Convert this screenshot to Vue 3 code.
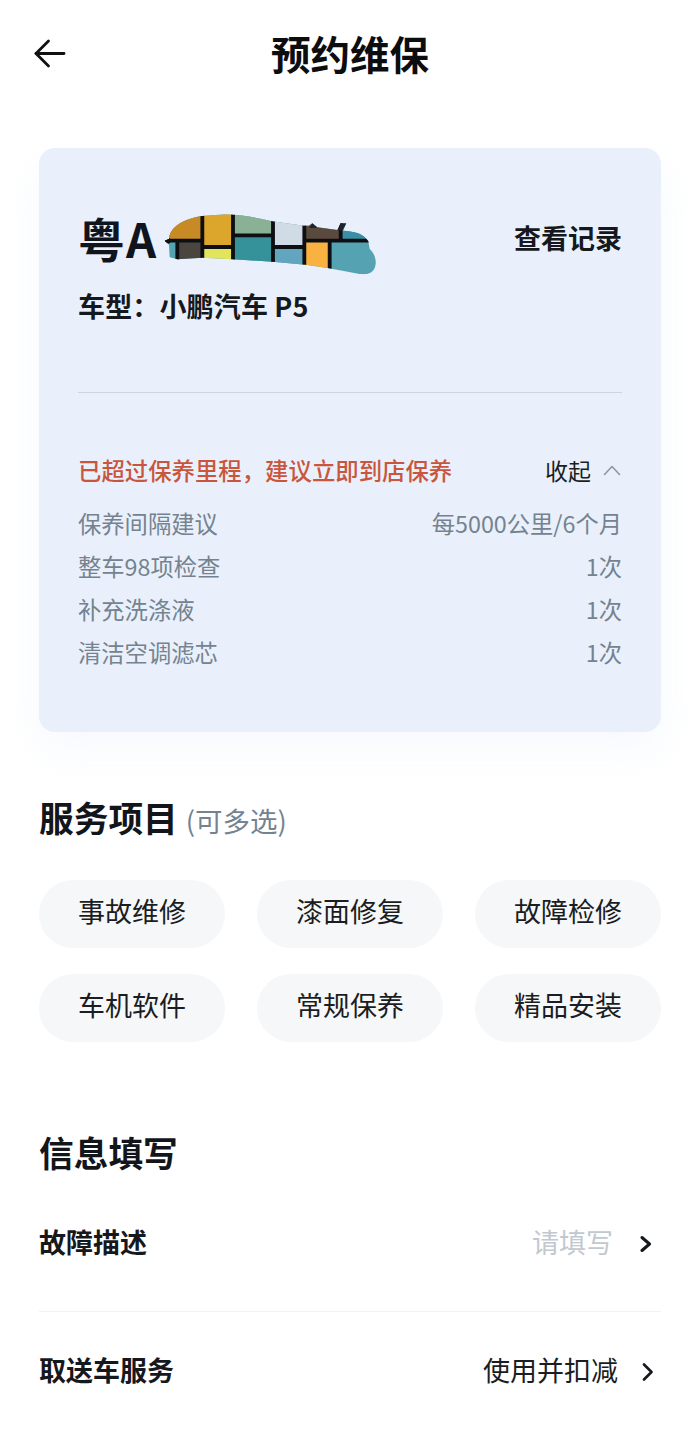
<template>
  <div class="page">
    <header class="nav">
      <svg class="back" width="32" height="30" viewBox="0 0 32 30" fill="none" stroke="#111" stroke-width="2.8" stroke-linecap="round" stroke-linejoin="round">
        <path d="M14.5 2 2 14.5 14.5 27" />
        <path d="M2 14.5H30" />
      </svg>
      <h1 class="nav-title">预约维保</h1>
    </header>

    <section class="card">
      <div class="plate-row">
        <div class="plate">
          <span class="plate-text">粤A</span>
          <svg class="smudge" width="212" height="62" viewBox="45 40 636 186">
            <defs>
              <clipPath id="smudge-clip">
                <path d="M60 115C62 80 100 55 160 46L230 41C290 44 340 54 370 62L465 75 H480L490 68 505 80 565 88 575 68H592L582 90C620 92 645 100 658 122L662 145C680 160 686 190 674 207 662 224 640 222 620 218L540 203 470 192 370 183 250 176 160 171 85 176 62 170 60 132 47 120Z" />
              </clipPath>
            </defs>
            <g clip-path="url(#smudge-clip)">
              <rect x="45" y="40" width="636" height="186" fill="#55a2b3" />
              <rect v-for="c in cells" :key="c.f + c.x" :x="c.x" :y="c.y" :width="c.w" :height="c.h" :fill="c.f" />
              <path d="M160 40V176M252 40V178M372 50V186M466 60V196M542 122V206M575 60V122M45 120H160M466 120H662M252 104H372M372 139H466M160 139H252M85 122V178" stroke="#0d0f12" stroke-width="11.5" fill="none" />
              <circle cx="56" cy="120" r="9" fill="#0d0f12" />
              <path d="M480 82 490 68 505 82ZM565 88 575 68H592L580 90Z" fill="#20242a" />
            </g>
          </svg>
        </div>
        <span class="records">查看记录</span>
      </div>
      <div class="model">车型：小鹏汽车 P5</div>
      <div class="divider"></div>
      <div class="alert-row">
        <span class="alert">已超过保养里程，建议立即到店保养</span>
        <span class="collapse">
          收起
          <svg width="18" height="11" viewBox="0 0 18 11" fill="none" stroke="#8d97a3" stroke-width="1.6" stroke-linecap="round" stroke-linejoin="round">
            <path d="M1.5 9.5 9 1.5 16.5 9.5" />
          </svg>
        </span>
      </div>
      <ul class="plan">
        <li v-for="item in plan" :key="item.name">
          <span>{{ item.name }}</span>
          <span>{{ item.value }}</span>
        </li>
      </ul>
    </section>

    <section class="services">
      <h2 class="heading">服务项目 <small>(可多选)</small></h2>
      <div class="pills">
        <div v-for="name in services" :key="name" class="pill">{{ name }}</div>
      </div>
    </section>

    <section class="info">
      <h2 class="heading">信息填写</h2>
      <div class="row row-first">
        <span class="row-label">故障描述</span>
        <span class="row-value placeholder">请填写</span>
        <svg class="chev" width="12" height="18" viewBox="0 0 12 18" fill="none" stroke="#15181c" stroke-width="3" stroke-linecap="round" stroke-linejoin="round">
          <path d="M2 2.5 9.5 9 2 15.5" />
        </svg>
      </div>
      <div class="row row-last">
        <span class="row-label">取送车服务</span>
        <span class="row-value">使用并扣减</span>
        <svg class="chev" width="12" height="18" viewBox="0 0 12 18" fill="none" stroke="#15181c" stroke-width="2.6" stroke-linecap="round" stroke-linejoin="round">
          <path d="M2 1.5 9.5 9 2 16.5" />
        </svg>
      </div>
    </section>
  </div>
</template>

<script setup>
const plan = [
  { name: '保养间隔建议', value: '每5000公里/6个月' },
  { name: '整车98项检查', value: '1次' },
  { name: '补充洗涤液', value: '1次' },
  { name: '清洁空调滤芯', value: '1次' }
]

const services = ['事故维修', '漆面修复', '故障检修', '车机软件', '常规保养', '精品安装']

const cells = [
  { x: 45, y: 40, w: 115, h: 80, f: '#c78a24' },
  { x: 160, y: 40, w: 92, h: 99, f: '#dca52c' },
  { x: 252, y: 40, w: 120, h: 64, f: '#8ab196' },
  { x: 372, y: 40, w: 94, h: 99, f: '#d0dbe6' },
  { x: 466, y: 60, w: 109, h: 60, f: '#5a4a3e' },
  { x: 575, y: 60, w: 106, h: 60, f: '#3b8fa5' },
  { x: 85, y: 120, w: 75, h: 60, f: '#4b4540' },
  { x: 160, y: 139, w: 92, h: 45, f: '#e2e55c' },
  { x: 252, y: 104, w: 120, h: 85, f: '#35929b' },
  { x: 372, y: 139, w: 94, h: 60, f: '#62a5bf' },
  { x: 466, y: 120, w: 76, h: 90, f: '#f9b142' }
]
</script>

<style>
html,
body {
  margin: 0;
  background: #fff;
}
</style>

<style scoped>
.page {
  width: 700px;
  height: 1432px;
  overflow: hidden;
  background: #fff;
  font-family: "Noto Sans CJK SC", "Noto Sans", sans-serif;
  color: #15181c;
}

.nav {
  position: relative;
  height: 148px;
  box-sizing: border-box;
  padding-top: 25px;
  text-align: center;
}

.back {
  position: absolute;
  left: 34px;
  top: 39px;
}

.nav-title {
  margin: 0;
  font-size: 39.5px;
  line-height: 56px;
  font-weight: 700;
  color: #0c0d0f;
}

.card {
  margin: 0 39px;
  height: 584px;
  box-sizing: border-box;
  padding: 58px 39px 0;
  background: #e9f0fb;
  border-radius: 16px;
  box-shadow: 0 18px 40px rgba(226, 234, 248, 0.3);
}

.plate-row {
  display: flex;
  justify-content: space-between;
  align-items: center;
  height: 70px;
}

.plate {
  display: flex;
  align-items: center;
}

.plate-text {
  font-size: 47px;
  line-height: 70px;
  font-weight: 700;
  letter-spacing: 1px;
  color: #10151d;
  margin-top: -6px;
}

.smudge {
  margin-left: 7px;
  margin-top: 8px;
}

.records {
  font-size: 27px;
  line-height: 40px;
  font-weight: 600;
  margin-top: -6px;
}

.model {
  margin-top: 11px;
  font-size: 27px;
  line-height: 38px;
  font-weight: 700;
  letter-spacing: 0.15px;
  color: #15181c;
}

.divider {
  margin-top: 67px;
  height: 1px;
  background: #cfd5dd;
}

.alert-row {
  margin-top: 57px;
  display: flex;
  justify-content: space-between;
  align-items: center;
  height: 40px;
}

.alert {
  font-size: 23.4px;
  font-weight: 500;
  color: #c9563c;
}

.collapse {
  display: flex;
  align-items: center;
  gap: 12px;
  margin-right: 1px;
  font-size: 23px;
  color: #1b1e22;
}

.plan {
  margin: 12px 0 0;
  padding: 0;
  list-style: none;
  font-size: 23.3px;
  color: #74838f;
}

.plan li {
  display: flex;
  justify-content: space-between;
  height: 43px;
  line-height: 43px;
}

.services {
  padding: 60px 39px 0;
}

.heading {
  margin: 0;
  font-size: 34.7px;
  line-height: 50px;
  font-weight: 700;
  color: #12161b;
}

.heading small {
  font-size: 27.5px;
  font-weight: 400;
  color: #74838f;
}

.pills {
  margin-top: 35px;
  display: grid;
  grid-template-columns: repeat(3, 1fr);
  gap: 26px 32px;
}

.pill {
  height: 68px;
  line-height: 62px;
  text-align: center;
  border-radius: 34px;
  background: #f6f7f9;
  font-size: 27px;
  color: #1a1d21;
}

.info {
  padding: 85px 39px 0;
}

.row {
  display: flex;
  align-items: center;
  height: 114px;
}

.row-first {
  margin-top: -5px;
  height: 140px;
  border-bottom: 1px solid #f1f2f4;
  box-sizing: border-box;
}

.row-label {
  flex: 1;
  font-size: 27px;
  font-weight: 700;
}

.row-value {
  font-size: 27px;
  color: #1a1d21;
}

.placeholder {
  color: #c2c8cf;
}

.chev {
  margin-top: 5px;
  margin-left: 24px;
  margin-right: 7px;
}

.row-first .chev {
  margin-left: 27px;
  margin-right: 9px;
}
</style>
